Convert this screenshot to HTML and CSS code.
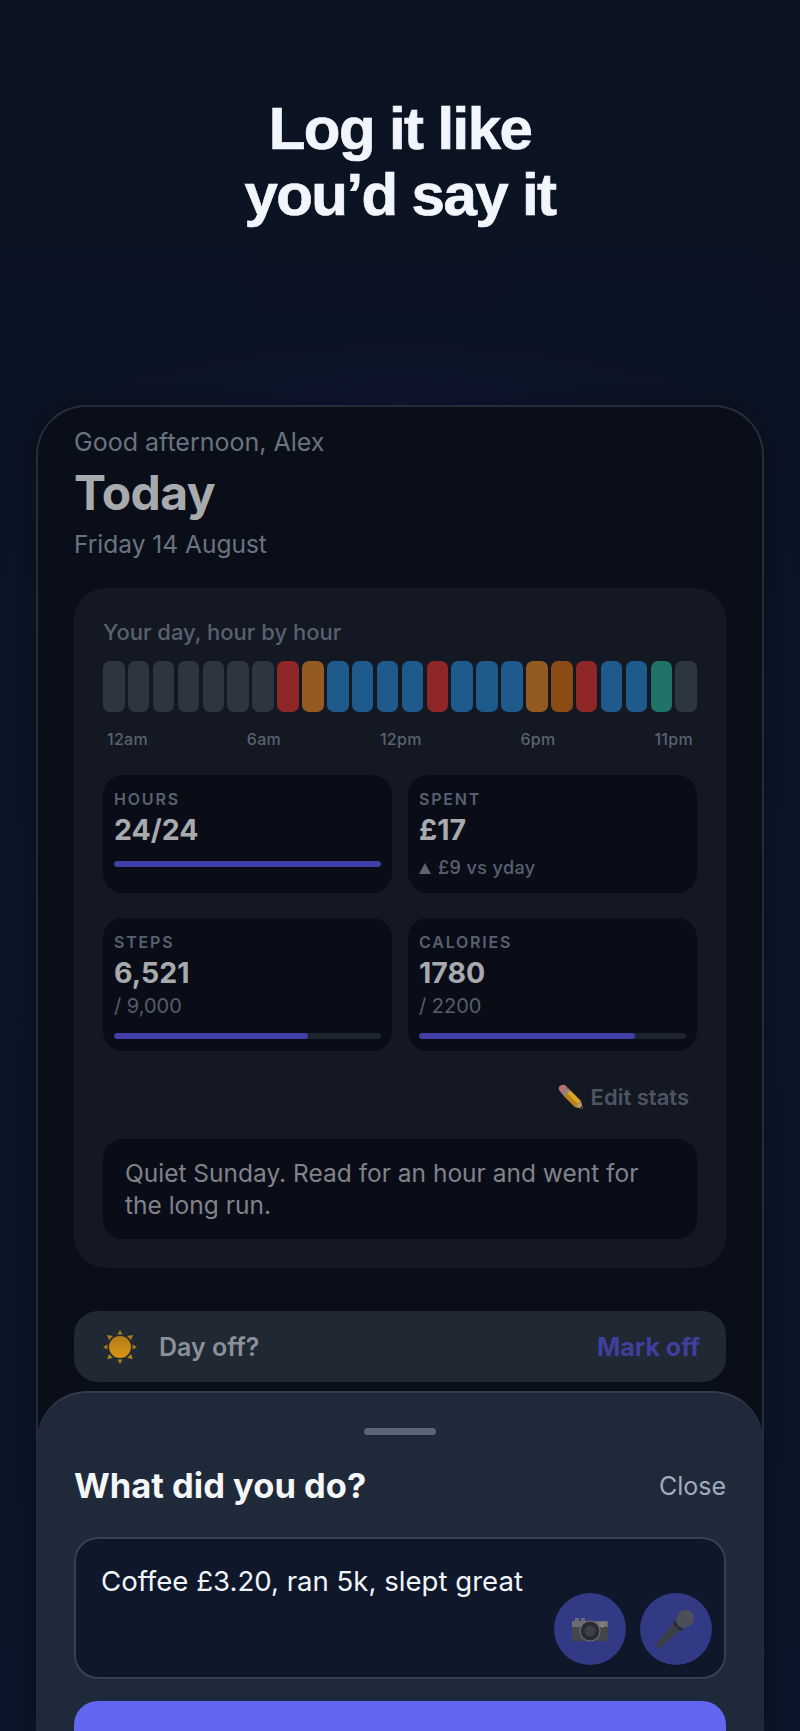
FILE: index.html
```html
<!DOCTYPE html>
<html lang="en">

<head>
	<meta charset="utf-8">
	<meta name="viewport" content="width=device-width, initial-scale=1.0">
	<title>Log it like you'd say it</title>
	<link rel="stylesheet" href="styles.css">
</head>

<body>
	<header class="hero">
		<h1>Log it like<br>you’d say it</h1>
	</header>

	<main class="phone">
		<div class="screen">
			<p class="greeting">Good afternoon, Alex</p>
			<h2 class="today">Today</h2>
			<p class="date">Friday 14 August</p>

			<section class="card">
				<h3 class="card-title">Your day, hour by hour</h3>
				<div class="hours">
					<span class="h idle"></span><span class="h idle"></span><span class="h idle"></span><span class="h idle"></span><span class="h idle"></span><span class="h idle"></span><span class="h idle"></span>
					<span class="h red"></span><span class="h amber"></span><span class="h blue"></span><span class="h blue"></span><span class="h blue"></span><span class="h blue"></span>
					<span class="h red"></span><span class="h blue"></span><span class="h blue"></span><span class="h blue"></span><span class="h amber"></span><span class="h rust"></span>
					<span class="h red"></span><span class="h blue"></span><span class="h blue"></span><span class="h teal"></span><span class="h idle"></span>
				</div>
				<div class="hour-labels">
					<span>12am</span><span>6am</span><span>12pm</span><span>6pm</span><span>11pm</span>
				</div>

				<div class="stats">
					<div class="stat short">
						<div class="stat-label">HOURS</div>
						<div class="stat-value">24/24</div>
						<div class="track gap-top"><div class="fill" style="width:100%"></div></div>
					</div>
					<div class="stat short">
						<div class="stat-label">SPENT</div>
						<div class="stat-value">£17</div>
						<div class="stat-delta"><span class="tri"></span>£9 vs yday</div>
					</div>
					<div class="stat">
						<div class="stat-label">STEPS</div>
						<div class="stat-value">6,521</div>
						<div class="stat-sub">/ 9,000</div>
						<div class="track"><div class="fill" style="width:72.5%"></div></div>
					</div>
					<div class="stat">
						<div class="stat-label">CALORIES</div>
						<div class="stat-value">1780</div>
						<div class="stat-sub">/ 2200</div>
						<div class="track"><div class="fill" style="width:81%"></div></div>
					</div>
				</div>

				<div class="edit">
					<svg class="pencil" viewBox="0 0 26 26" width="26" height="26">
						<path d="M12 6 L23 17 L17 23 L6 12 Z" fill="#dba528"/>
						<path d="M9 9 L20 20 L17 23 L6 12 Z" fill="#b9811a"/>
						<path d="M23 17 L25 25 L17 23 Z" fill="#b59a6a"/>
						<path d="M23.8 21.8 L25 25 L21.8 24.2 Z" fill="#2f2a25"/>
						<path d="M10 4 L12 6 L6 12 L4 10 Z" fill="#8a8f98"/>
						<path d="M1 6 Q0 3 2 2 Q4 0 7 1 L10 4 L4 10 Z" fill="#b5716f"/>
					</svg>
					<span>Edit stats</span>
				</div>

				<p class="note">Quiet Sunday. Read for an hour and went for the long run.</p>
			</section>

			<section class="dayoff">
				<svg class="sun" viewBox="0 0 36 36" width="36" height="36">
					<defs>
						<linearGradient id="sunfill" x1="0" y1="0" x2="0" y2="1">
							<stop offset="0" stop-color="#b07c18"/>
							<stop offset="1" stop-color="#dc9414"/>
						</linearGradient>
					</defs>
					<g fill="#a87f1c">
						<path d="M18 1 L20.5 5.5 L15.5 5.5 Z"/>
						<path d="M18 35 L20.5 30.5 L15.5 30.5 Z"/>
						<path d="M1 18 L5.5 15.5 L5.5 20.5 Z"/>
						<path d="M35 18 L30.5 15.5 L30.5 20.5 Z"/>
						<path d="M5 6 L11 7 L7 11 Z"/>
						<path d="M31 6 L25 7 L29 11 Z"/>
						<path d="M5 30 L11 29 L7 25 Z"/>
						<path d="M31 30 L25 29 L29 25 Z"/>
					</g>
					<circle cx="18" cy="18" r="11" fill="url(#sunfill)"/>
				</svg>
				<span class="dayoff-text">Day off?</span>
				<span class="markoff">Mark off</span>
			</section>
		</div>

		<section class="sheet">
			<div class="handle"></div>
			<div class="sheet-head">
				<h2>What did you do?</h2>
				<span class="close">Close</span>
			</div>
			<div class="input">
				<p>Coffee £3.20, ran 5k, slept great</p>
				<div class="input-btns">
					<div class="round">
						<svg viewBox="0 0 38 28" width="38" height="28">
							<path d="M1 6 L4 6 L4 3 L8 3 L8 6 L10 6 L10 3 L14 3 L14 6 L37 6 L37 26 L1 26 Z" fill="#6a6c72"/>
							<rect x="1" y="12" width="36" height="14" fill="#44464c"/>
							<circle cx="19" cy="16" r="10" fill="#2a2c33" stroke="#6a6c72" stroke-width="1.2"/>
							<circle cx="19" cy="16" r="5.5" fill="#3e4048"/>
							<rect x="28" y="7" width="7" height="4" fill="#7a7c82"/>
							<circle cx="31" cy="11.5" r="1" fill="#b8a22a"/>
						</svg>
					</div>
					<div class="round">
						<svg viewBox="0 0 38 38" width="38" height="38">
							<g transform="translate(28 9) rotate(45)">
								<path d="M-5.5 7 L5.5 7 L2.6 39 Q0 41 -2.6 39 Z" fill="#3a3e46"/>
								<rect x="-5.5" y="6" width="11" height="6" fill="#2a2c33"/>
								<ellipse cx="0" cy="0" rx="8.5" ry="9.5" fill="#4c4f58"/>
							</g>
						</svg>
					</div>
				</div>
			</div>
			<button class="save"></button>
		</section>
	</main>
</body>

</html>
```

FILE: styles.css
```css
*,
body * {
	box-sizing: border-box;
}

html,
body {
	margin: 0;
	padding: 0;
	height: 100%;
}

body {
	height: 1731px;
	overflow: hidden;
	display: flex;
	flex-direction: column;
	align-items: center;
	font-family: "Inter", "Liberation Sans", sans-serif;
	background:
		radial-gradient(ellipse 320px 70px at 50% 405px, #0f1630 0%, rgba(15, 22, 48, 0) 100%),
		linear-gradient(180deg, #0b1322 0%, #0b1424 25%, #0b1628 50%, #0c1529 100%);
}

.hero {
	padding-top: 96px;
	height: 405px;
	flex-shrink: 0;
}

h1 {
	margin: 0;
	color: #f3f5fc;
	font-family: "Liberation Sans", sans-serif;
	font-size: 60px;
	line-height: 66px;
	font-weight: 700;
	letter-spacing: -1.6px;
	-webkit-text-stroke: 0.7px #f3f5fc;
	text-align: center;
}

.phone {
	position: relative;
	width: 728px;
	flex: 1;
	border: 2px solid #262c39;
	border-bottom: 0;
	border-radius: 50px 50px 0 0;
	background: #0a0e19;
	box-shadow: 0 0 22px rgba(4, 7, 14, 0.4);
}

.screen {
	padding: 21px 36px 0;
}

.greeting,
.date {
	margin: 0;
	color: #6b7280;
	line-height: 29px;
}

.greeting {
	font-size: 25px;
}

.date {
	font-size: 24.5px;
}

.today {
	margin: 8px 0 9px;
	color: #a8abae;
	font-size: 48px;
	line-height: 56px;
	font-weight: 700;
	letter-spacing: -0.6px;
}

.card {
	margin-top: 29px;
	padding: 30px 29px 28px;
	height: 680px;
	background: #131822;
	border-radius: 32px;
}

.card-title {
	margin: 0;
	color: #596170;
	font-size: 22px;
	line-height: 28px;
	font-weight: 500;
}

.hours {
	display: grid;
	grid-template-columns: repeat(24, 1fr);
	gap: 3.4px;
	margin-top: 15px;
	height: 51px;
}

.h {
	border-radius: 7px;
}

.idle { background: #2d3540; }
.red { background: #8f2627; }
.amber { background: #935a22; }
.rust { background: #8a4c14; }
.blue { background: #1f5a8d; }
.teal { background: #1f7367; }

.hour-labels {
	display: flex;
	justify-content: space-between;
	padding: 0 4px;
	margin-top: 17px;
	color: #5a6270;
	font-size: 16px;
	line-height: 20px;
	font-weight: 500;
	letter-spacing: 0.3px;
}

.stats {
	display: grid;
	grid-template-columns: 1fr 1fr;
	gap: 25px 16px;
	margin-top: 26px;
}

.stat {
	background: #0a0d18;
	border-radius: 20px;
	padding: 14px 11px 12px;
}

.short {
	height: 118px;
}

.stat-label {
	color: #596170;
	font-size: 16px;
	line-height: 20px;
	font-weight: 600;
	letter-spacing: 1.8px;
}

.stat-value {
	color: #a8abae;
	font-size: 28.5px;
	line-height: 36px;
	font-weight: 700;
	margin-top: 3px;
}

.stat-sub {
	color: #565d6a;
	font-size: 20px;
	line-height: 28px;
	margin-top: 1px;
}

.stat-delta {
	color: #596170;
	font-size: 18px;
	line-height: 24px;
	font-weight: 500;
	margin-top: 8px;
	letter-spacing: 0.4px;
	display: flex;
	align-items: center;
}

.tri {
	width: 0;
	height: 0;
	border-left: 6px solid transparent;
	border-right: 6px solid transparent;
	border-bottom: 11px solid #5d6571;
	margin-right: 7px;
}

.track {
	height: 6px;
	background: #1e242e;
	border-radius: 3px;
	margin-top: 13px;
	overflow: hidden;
}

.gap-top {
	margin-top: 13px;
}

.fill {
	height: 100%;
	background: #423fa6;
	border-radius: 3px;
}

.edit {
	display: flex;
	justify-content: flex-end;
	align-items: center;
	gap: 7px;
	margin-top: 32px;
	padding-right: 8px;
	color: #4e5562;
	font-size: 22px;
	line-height: 28px;
	font-weight: 600;
}

.note {
	margin: 28px 0 0;
	padding: 18px 22px 18px;
	background: #0a0d18;
	border-radius: 20px;
	color: #80838a;
	font-size: 24.5px;
	line-height: 32px;
}

.dayoff {
	display: flex;
	align-items: center;
	margin-top: 43px;
	height: 71px;
	padding: 0 26px 0 28px;
	background: #1f2833;
	border-radius: 24px;
}

.dayoff-text {
	margin-left: 21px;
	color: #8b9099;
	font-size: 25px;
	font-weight: 600;
	flex: 1;
}

.markoff {
	color: #3f3f9e;
	font-size: 25px;
	font-weight: 700;
}

.sheet {
	position: absolute;
	left: -1px;
	right: -1px;
	bottom: 0;
	height: 340px;
	padding: 35px 37px 0;
	background: linear-gradient(180deg, #1f293a 0%, #1e2a3b 100%);
	border-top: 2px solid #343d4c;
	border-radius: 50px 50px 0 0;
}

.handle {
	width: 72px;
	height: 7px;
	margin: 0 auto;
	background: #5d6675;
	border-radius: 4px;
}

.sheet-head {
	display: flex;
	justify-content: space-between;
	align-items: center;
	margin-top: 29px;
}

.sheet-head h2 {
	margin: 0;
	color: #f4f6f8;
	font-size: 34.5px;
	line-height: 44px;
	font-weight: 700;
}

.close {
	color: #a3acb9;
	font-size: 25px;
}

.input {
	position: relative;
	height: 142px;
	margin-top: 29px;
	padding: 25px 25px;
	background: #0f172a;
	border: 2px solid #334155;
	border-radius: 24px;
}

.input p {
	margin: 0;
	color: #f1f5f9;
	font-size: 27.6px;
	line-height: 34px;
}

.input-btns {
	position: absolute;
	right: 12px;
	bottom: 12px;
	display: flex;
	gap: 14px;
}

.round {
	width: 72px;
	height: 72px;
	border-radius: 50%;
	background: #333a85;
	display: flex;
	align-items: center;
	justify-content: center;
}

.save {
	display: block;
	width: 100%;
	height: 80px;
	margin-top: 22px;
	border: 0;
	background: #6366f1;
	border-radius: 24px;
}
```
